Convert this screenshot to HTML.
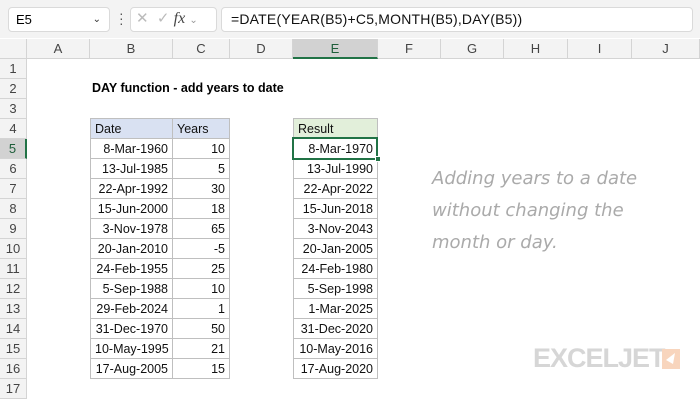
<!DOCTYPE html><html><head><style>
*{margin:0;padding:0;box-sizing:border-box}
body{width:700px;height:400px;background:#fff;font-family:"Liberation Sans",Calibri,sans-serif;position:relative;overflow:hidden}
.a{position:absolute;white-space:nowrap}
.top{left:0;top:0;width:700px;height:38px;background:#f3f3f3}
.box{background:#fff;border:1px solid #dadada;border-radius:4px}
.hdr{top:39px;height:20px;background:#f3f3f3;border-right:1px solid #d4d4d4;border-bottom:1px solid #d4d4d4;font-size:13px;color:#444;text-align:center;line-height:19px}
.rh{left:0;width:27px;height:20px;background:#f3f3f3;border-bottom:1px solid #d4d4d4;border-right:1px solid #d4d4d4;font-size:13px;color:#444;text-align:center;line-height:20px}
.c{height:21px;font-size:12.5px;line-height:20px;padding:0 4px;color:#111;border:1px solid #bfbfbf;margin:-1px 0 0 -1px;overflow:hidden}
.r{text-align:right}
</style></head><body>
<div class="a top"></div>
<div class="a box" style="left:8px;top:7px;width:102px;height:25px;font-size:13px;line-height:23px;padding-left:7px">E5<span class="a" style="right:8px;top:0;font-size:10px;color:#333">&#8964;</span></div>
<div class="a" style="left:119px;top:11px;width:3px;height:16px;font-size:14px;line-height:5px;color:#555">·<br>·<br>·</div>
<div class="a box" style="left:130px;top:7px;width:87px;height:25px;font-size:15px;color:#bbb;line-height:22px;padding-left:5px">✕ &nbsp;✓ <i style="font-family:'Liberation Serif',serif;color:#444;font-size:16px">fx</i> <span style="font-size:10px;color:#999">&#8964;</span></div>
<div class="a box" style="left:221px;top:7px;width:472px;height:25px;font-size:14px;line-height:23px;padding-left:9px;color:#111;letter-spacing:0.2px">=DATE(YEAR(B5)+C5,MONTH(B5),DAY(B5))</div>
<div class="a hdr" style="left:0;width:27px"></div>
<div class="a hdr" style="left:27px;width:63px">A</div>
<div class="a hdr" style="left:90px;width:83px">B</div>
<div class="a hdr" style="left:173px;width:57px">C</div>
<div class="a hdr" style="left:230px;width:63px">D</div>
<div class="a hdr" style="left:293px;width:85px;background:#d2d2d2;border-bottom:2px solid #217346;color:#1e5e3a">E</div>
<div class="a hdr" style="left:378px;width:63px">F</div>
<div class="a hdr" style="left:441px;width:63px">G</div>
<div class="a hdr" style="left:504px;width:64px">H</div>
<div class="a hdr" style="left:568px;width:64px">I</div>
<div class="a hdr" style="left:632px;width:68px">J</div>
<div id="rows"></div>
<div class="a" style="left:92px;top:78px;font-size:12.5px;font-weight:bold;line-height:20px">DAY function - add years to date</div>
<div class="a" style="left:432px;top:163px;font-family:'DejaVu Sans',sans-serif;font-size:18px;line-height:32px;color:#aaa;font-style:italic">Adding years to a date<br>without changing the<br>month or day.</div>
<div class="a" style="left:533px;top:343px;font-size:27px;font-weight:900;color:#d6d6d6;letter-spacing:-1px;font-family:'Liberation Sans',sans-serif">EXCELJET</div>
<div class="a" style="left:662px;top:349px;width:18px;height:20px;background:#f8d5bd"><svg width="18" height="20"><path d="M13 4 L4 11 L11 15 Z" fill="#fff"/></svg></div>
<script>
var d=[["8-Mar-1960",10,"8-Mar-1970"],["13-Jul-1985",5,"13-Jul-1990"],["22-Apr-1992",30,"22-Apr-2022"],["15-Jun-2000",18,"15-Jun-2018"],["3-Nov-1978",65,"3-Nov-2043"],["20-Jan-2010",-5,"20-Jan-2005"],["24-Feb-1955",25,"24-Feb-1980"],["5-Sep-1988",10,"5-Sep-1998"],["29-Feb-2024",1,"1-Mar-2025"],["31-Dec-1970",50,"31-Dec-2020"],["10-May-1995",21,"10-May-2016"],["17-Aug-2005",15,"17-Aug-2020"]];
var h="";
for(var i=1;i<=17;i++){var t=59+(i-1)*20;h+='<div class="a rh" style="top:'+t+'px;'+(i==5?'background:#d2d2d2;border-right:2px solid #217346;color:#1e5e3a':'')+'">'+i+'</div>';}
h+='<div class="a c" style="left:91px;top:119px;width:83px;background:#d9e1f2">Date</div><div class="a c" style="left:173px;top:119px;width:58px;background:#d9e1f2">Years</div><div class="a c" style="left:294px;top:119px;width:85px;background:#e2efda">Result</div>';
for(var j=0;j<12;j++){var t=139+j*20;h+='<div class="a c r" style="left:91px;top:'+t+'px;width:83px">'+d[j][0]+'</div><div class="a c r" style="left:173px;top:'+t+'px;width:58px">'+d[j][1]+'</div><div class="a c r" style="left:294px;top:'+t+'px;width:85px">'+d[j][2]+'</div>';}
h+='<div class="a" style="left:292px;top:137px;width:86px;height:23px;border:2px solid #217346"></div><div class="a" style="left:375px;top:156px;width:6px;height:6px;background:#217346;border:1px solid #fff"></div>';
document.getElementById("rows").innerHTML=h;
</script>
</body></html>
